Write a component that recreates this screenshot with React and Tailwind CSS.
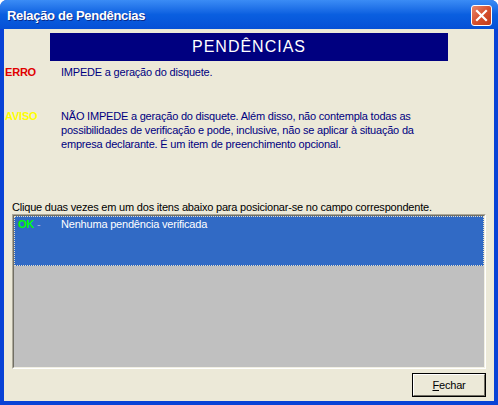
import React from 'react';

const CloseButton = () => (
  <div className="w-[21px] h-[21px] rounded-[3px] border border-white bg-gradient-to-br from-[#e8876b] via-[#d6502e] to-[#c23b1a] flex items-center justify-center">
    <svg width="13" height="13" viewBox="0 0 13 13">
      <path d="M2 2 L11 11 M11 2 L2 11" stroke="#fff" strokeWidth="2.2" strokeLinecap="square" />
    </svg>
  </div>
);

const App = () => {
  return (
    <div className="w-[498px] h-[405px] flex flex-col bg-[#0842d6] rounded-t-[7px] overflow-hidden font-['Tahoma','Liberation_Sans',sans-serif] text-[11px] leading-[14px] tracking-[-0.2px]">
      {/* Title bar */}
      <div className="h-[29px] shrink-0 flex items-center justify-between pl-[7px] pr-[6px] pt-[2px] bg-gradient-to-b from-[#3b8cf5] via-[#0a5fe0] to-[#0650d6]">
        <span className="text-white font-bold text-[13px] tracking-[-0.3px] [text-shadow:1px_1px_0_#0a2a8a]">Relação de Pendências</span>
        <CloseButton />
      </div>

      {/* Client area */}
      <div className="flex-1 mx-[4px] mb-[4px] bg-[#ece9d8] flex flex-col text-[#000080]">
        <div className="mt-[4px] ml-[46px] w-[398px] h-[28px] bg-[#000080] text-white text-[16px] tracking-[1px] font-['Liberation_Sans',sans-serif] flex items-center justify-center">
          PENDÊNCIAS
        </div>

        <div className="flex mt-[4px]">
          <span className="w-[57px] pl-[1px] text-[#e00000] font-bold">ERRO</span>
          <span>IMPEDE a geração do disquete.</span>
        </div>

        <div className="flex mt-[30px]">
          <span className="w-[57px] pl-[1px] text-[#ffff00] font-bold">AVISO</span>
          <span>
            NÃO IMPEDE a geração do disquete. Além disso, não contempla todas as<br />
            possibilidades de verificação e pode, inclusive, não se aplicar à situação da<br />
            empresa declarante. É um item de preenchimento opcional.
          </span>
        </div>

        <div className="mt-[49px] ml-[8px] text-black">
          Clique duas vezes em um dos itens abaixo para posicionar-se no campo correspondente.
        </div>

        {/* List box */}
        <div className="ml-[8px] w-[474px] h-[155px] border-t border-l border-[#aca899] border-b border-r border-b-white border-r-white">
          <div className="h-full border-t border-l border-[#716f64] border-b border-r border-b-[#f1efe2] border-r-[#f1efe2] bg-[#c0c0c0]">
            <div className="h-[50px] bg-[#316ac5] border border-dotted border-[#e8e0c8] flex items-start">
              <span className="w-[46px] pl-[3px] font-bold text-[#00ff00]">
                OK <span className="font-normal text-[#9db4e0]">-</span>
              </span>
              <span className="text-white">Nenhuma pendência verificada</span>
            </div>
          </div>
        </div>

        <div className="flex justify-end mt-[4px] mr-[8px]">
          <button className="w-[74px] h-[24px] border border-black bg-[#ece9d8] text-black">
            <span className="flex items-center justify-center w-full h-full border-t border-l border-white border-b border-r border-b-[#716f64] border-r-[#716f64]">
              <span><span className="underline">F</span>echar</span>
            </span>
          </button>
        </div>
      </div>
    </div>
  );
};

export default App;
